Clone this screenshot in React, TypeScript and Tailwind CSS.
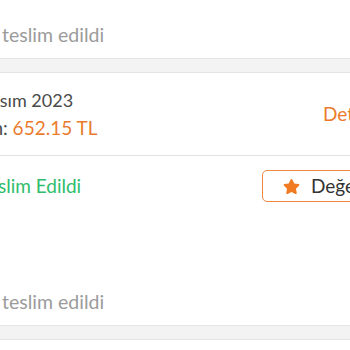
import { FaStar } from 'react-icons/fa';

const font = { fontFamily: 'Lato, "Open Sans", sans-serif' };

function Band() {
  return <div className="h-[15px] border-y border-[#e4e4e4] bg-[#f3f3f3]" />;
}

export default function App() {
  return (
    <div className="w-[350px] h-[350px] overflow-hidden bg-white text-[19px]" style={font}>
      <div className="w-[470px] -ml-[21px]">
        {/* previous order footer */}
        <div className="h-[58px] pt-[12px] flex items-center">
          <p className="-ml-[38px] whitespace-nowrap text-[19.5px] text-[#9b9b9b]">1 ürün teslim edildi</p>
        </div>
        <Band />

        {/* order card */}
        <div className="h-[83px] border-b border-[#e2e2e2] flex items-center">
          <div className="w-[344px] leading-[27px]">
            <p className="text-[18px] text-[#4a4a4a] whitespace-nowrap">Kasım 2023</p>
            <p className="-ml-[43px] whitespace-nowrap text-[#4a4a4a]">
              Ödenen: <span className="text-[#ea7b2e]">652.15 TL</span>
            </p>
          </div>
          <span className="text-[#ea7b2e] whitespace-nowrap">Detaylar</span>
        </div>

        <div className="h-[60px] flex items-center">
          <div className="w-[283px]">
            <p className="text-[#2dbd6b] whitespace-nowrap">Teslim Edildi</p>
          </div>
          <button className="h-[32px] flex items-center gap-[11px] pl-[20px] pr-[16px] border border-[#ef8a3e] rounded-[5px] text-[#333]">
            <FaStar className="text-[#f07b22]" size={17} />
            <span className="whitespace-nowrap">Değerlendir</span>
          </button>
        </div>

        <div className="h-[63px]" />

        <div className="h-[46px] flex items-center">
          <p className="-ml-[38px] whitespace-nowrap text-[19.5px] text-[#9b9b9b]">1 ürün teslim edildi</p>
        </div>
        <Band />
        <div className="h-[40px]" />
      </div>
    </div>
  );
}
